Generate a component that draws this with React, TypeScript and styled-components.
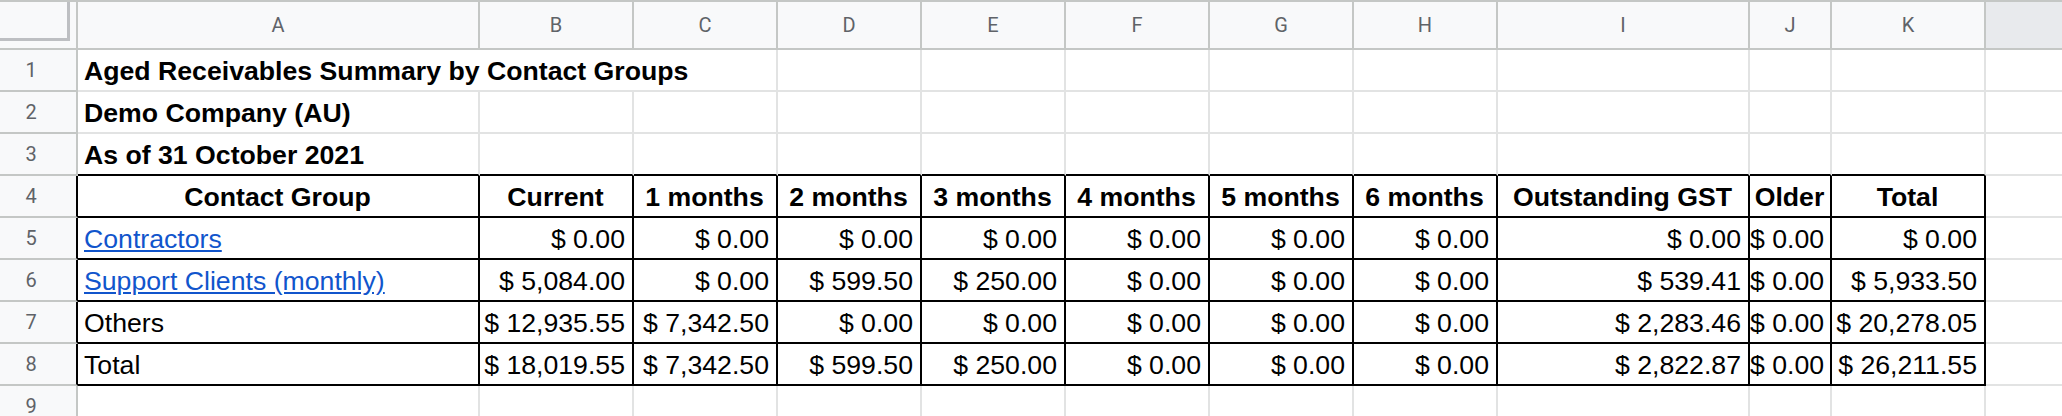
import React from 'react';
import styled, { createGlobalStyle } from 'styled-components';

const GRID = '#e2e3e3';
const HEAD_LINE = '#c4c7c5';
const HEAD_BG = '#f8f9fa';
const INK = '#000000';

const GlobalStyle = createGlobalStyle`
  html, body { margin: 0; padding: 0; background: #ffffff; overflow: hidden; }
  body { width: 2062px; height: 416px; }
  * { box-sizing: border-box; }
`;

const Sheet = styled.div`
  width: 2062px;
  height: 416px;
  overflow: hidden;
  border-top: 2px solid ${HEAD_LINE};
  display: grid;
  grid-template-columns: 78px 402px 154px repeat(6, 144px) 252px 82px 154px 1fr;
  grid-template-rows: 48px repeat(9, 42px);
  align-content: start;
`;

const Corner = styled.div`
  background: ${HEAD_BG};
  border-right: 2px solid ${HEAD_LINE};
  border-bottom: 2px solid ${HEAD_LINE};
`;

const FreezeHandle = styled.div`
  width: 70px;
  height: 39px;
  border-right: 3px solid #bdbfc2;
  border-bottom: 3px solid #bdbfc2;
`;

const ColumnHeader = styled.div<{ $blank?: boolean }>`
  background: ${(p) => (p.$blank ? '#e8eaed' : HEAD_BG)};
  border-right: ${(p) => (p.$blank ? 'none' : `2px solid ${HEAD_LINE}`)};
  border-bottom: 2px solid ${HEAD_LINE};
  display: flex;
  align-items: center;
  justify-content: center;
  font: 400 20px Roboto, 'Liberation Sans', sans-serif;
  color: #5f6368;
`;

const RowHeader = styled.div<{ $boxed?: boolean }>`
  background: ${HEAD_BG};
  border-right: 2px solid ${(p) => (p.$boxed ? INK : HEAD_LINE)};
  border-bottom: 2px solid ${HEAD_LINE};
  display: flex;
  align-items: center;
  justify-content: center;
  padding-right: 14px;
  font: 400 20px Roboto, 'Liberation Sans', sans-serif;
  color: #5f6368;
`;

type Align = 'left' | 'center' | 'right';

const Cell = styled.div<{
  $align?: Align;
  $bold?: boolean;
  $rightLine?: string;
  $bottomLine?: string;
  $span?: number;
  $tight?: boolean;
}>`
  grid-column: span ${(p) => p.$span ?? 1};
  background: #ffffff;
  border-right: ${(p) => (p.$rightLine === 'none' ? 'none' : `2px solid ${p.$rightLine ?? GRID}`)};
  border-bottom: 2px solid ${(p) => p.$bottomLine ?? GRID};
  display: flex;
  align-items: flex-end;
  justify-content: ${(p) =>
    p.$align === 'right' ? 'flex-end' : p.$align === 'center' ? 'center' : 'flex-start'};
  padding: ${(p) => (p.$tight ? '0 0 4px 0' : '0 7px 4px 6px')};
  font-family: 'Liberation Sans', Arial, sans-serif;
  font-size: 26.67px;
  line-height: 30px;
  font-weight: ${(p) => (p.$bold ? 700 : 400)};
  color: ${INK};
  white-space: nowrap;
  overflow: hidden;
`;

const Link = styled.a`
  color: #1155cc;
  text-decoration: underline;
`;

const LETTERS = ['A', 'B', 'C', 'D', 'E', 'F', 'G', 'H', 'I', 'J', 'K'];

const HEADINGS = [
  'Contact Group',
  'Current',
  '1 months',
  '2 months',
  '3 months',
  '4 months',
  '5 months',
  '6 months',
  'Outstanding GST',
  'Older',
  'Total',
];

type DataRow = { name: string; link?: boolean; values: string[] };

const DATA: DataRow[] = [
  {
    name: 'Contractors',
    link: true,
    values: ['$ 0.00', '$ 0.00', '$ 0.00', '$ 0.00', '$ 0.00', '$ 0.00', '$ 0.00', '$ 0.00', '$ 0.00', '$ 0.00'],
  },
  {
    name: 'Support Clients (monthly)',
    link: true,
    values: ['$ 5,084.00', '$ 0.00', '$ 599.50', '$ 250.00', '$ 0.00', '$ 0.00', '$ 0.00', '$ 539.41', '$ 0.00', '$ 5,933.50'],
  },
  {
    name: 'Others',
    values: ['$ 12,935.55', '$ 7,342.50', '$ 0.00', '$ 0.00', '$ 0.00', '$ 0.00', '$ 0.00', '$ 2,283.46', '$ 0.00', '$ 20,278.05'],
  },
  {
    name: 'Total',
    values: ['$ 18,019.55', '$ 7,342.50', '$ 599.50', '$ 250.00', '$ 0.00', '$ 0.00', '$ 0.00', '$ 2,822.87', '$ 0.00', '$ 26,211.55'],
  },
];

const TITLES = ['Aged Receivables Summary by Contact Groups', 'Demo Company (AU)', 'As of 31 October 2021'];

export default function App() {
  return (
    <>
      <GlobalStyle />
      <Sheet>
        <Corner>
          <FreezeHandle />
        </Corner>
        {LETTERS.map((l) => (
          <ColumnHeader key={l}>{l}</ColumnHeader>
        ))}
        <ColumnHeader $blank />

        {TITLES.map((t, i) => {
          const lastTitle = i === 2;
          const bottom = lastTitle ? INK : GRID;
          const span = i === 0 ? 3 : 1;
          return (
            <React.Fragment key={t}>
              <RowHeader>{i + 1}</RowHeader>
              <Cell $bold $span={span} $bottomLine={bottom}>
                {t}
              </Cell>
              {LETTERS.slice(span).map((l) => (
                <Cell key={l} $bottomLine={bottom} />
              ))}
              <Cell $rightLine="none" />
            </React.Fragment>
          );
        })}

        <RowHeader $boxed>4</RowHeader>
        {HEADINGS.map((h) => (
          <Cell key={h} $bold $align="center" $rightLine={INK} $bottomLine={INK}>
            {h}
          </Cell>
        ))}
        <Cell $rightLine="none" />

        {DATA.map((row, r) => (
          <React.Fragment key={row.name}>
            <RowHeader $boxed>{r + 5}</RowHeader>
            <Cell $rightLine={INK} $bottomLine={INK}>
              {row.link ? <Link href="#">{row.name}</Link> : row.name}
            </Cell>
            {row.values.map((v, c) => (
              <Cell
                key={c}
                $align={c === 8 ? 'left' : 'right'}
                $tight={c === 8}
                $rightLine={INK}
                $bottomLine={INK}
              >
                {v}
              </Cell>
            ))}
            <Cell $rightLine="none" />
          </React.Fragment>
        ))}

        <RowHeader>9</RowHeader>
        {LETTERS.map((l) => (
          <Cell key={l} />
        ))}
        <Cell $rightLine="none" />
      </Sheet>
    </>
  );
}
